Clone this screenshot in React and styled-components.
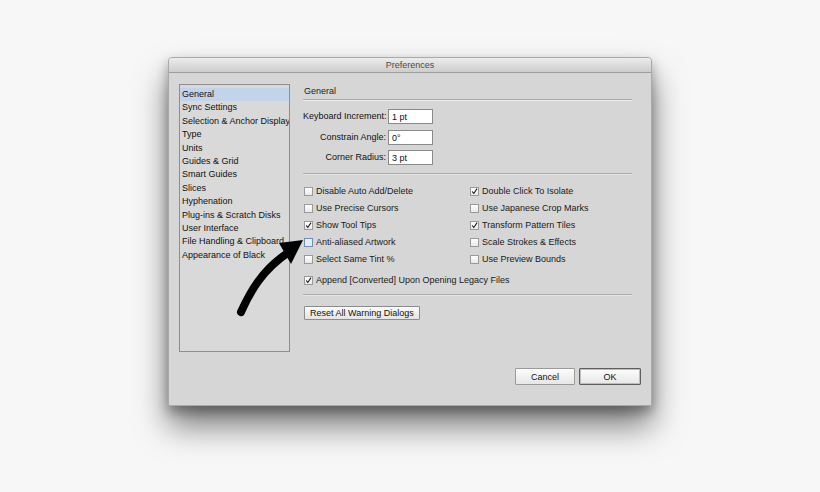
import React from 'react'
import styled, { createGlobalStyle } from 'styled-components'

const Global = createGlobalStyle`
  html, body { margin: 0; padding: 0; background: #f7f7f7; }
  body { font-family: "Liberation Sans", Arial, sans-serif; }
`

const sections = [
  'General', 'Sync Settings', 'Selection & Anchor Display', 'Type', 'Units',
  'Guides & Grid', 'Smart Guides', 'Slices', 'Hyphenation', 'Plug-ins & Scratch Disks',
  'User Interface', 'File Handling & Clipboard', 'Appearance of Black',
]

const fields = [
  { label: 'Keyboard Increment:', value: '1 pt' },
  { label: 'Constrain Angle:', value: '0°' },
  { label: 'Corner Radius:', value: '3 pt' },
]

const checks = [
  ['Disable Auto Add/Delete', false], ['Double Click To Isolate', true],
  ['Use Precise Cursors', false], ['Use Japanese Crop Marks', false],
  ['Show Tool Tips', true], ['Transform Pattern Tiles', true],
  ['Anti-aliased Artwork', false, true], ['Scale Strokes & Effects', false],
  ['Select Same Tint %', false], ['Use Preview Bounds', false],
]

function Check({ on, focus, children }) {
  return (
    <S.CheckRow>
      <S.Box $focus={focus}>
        {on && (
          <svg width="9" height="9" viewBox="0 0 9 9">
            <path d="M1.5 4.5 L3.6 7 L7.8 0.8" fill="none" stroke="#111" strokeWidth="1.3" />
          </svg>
        )}
      </S.Box>
      {children}
    </S.CheckRow>
  )
}

export default function App() {
  return (
    <S.Page>
      <Global />
      <S.Window>
        <S.TitleBar>Preferences</S.TitleBar>
        <S.Body>
          <S.Sidebar>
            {sections.map((s, i) => (
              <S.Item key={s} $active={i === 0}>{s}</S.Item>
            ))}
          </S.Sidebar>
          <S.Main>
            <S.Heading>General</S.Heading>
            <S.Fields>
              {fields.map(f => (
                <S.FieldRow key={f.label}>
                  <S.Label>{f.label}</S.Label>
                  <S.Input>{f.value}</S.Input>
                </S.FieldRow>
              ))}
            </S.Fields>
            <S.Rule />
            <S.Checks>
              {checks.map(([t, on, focus]) => (
                <Check key={t} on={on} focus={focus}>{t}</Check>
              ))}
            </S.Checks>
            <S.Single>
              <Check on>Append [Converted] Upon Opening Legacy Files</Check>
            </S.Single>
            <S.Rule />
            <S.SmallButton>Reset All Warning Dialogs</S.SmallButton>
          </S.Main>
        </S.Body>
        <S.Footer>
          <S.Button>Cancel</S.Button>
          <S.Button $default>OK</S.Button>
        </S.Footer>
      </S.Window>
      <S.Arrow viewBox="0 0 820 492" width="820" height="492">
        <path d="M241 312 C 250 292, 262 270, 289 252" fill="none" stroke="#000" strokeWidth="8" strokeLinecap="round" />
        <polygon points="303,240 279,243 291,264" fill="#000" />
      </S.Arrow>
    </S.Page>
  )
}

const S = {
  Page: styled.div`
    position: relative;
    width: 820px;
    height: 492px;
    padding: 57px 0 0 168px;
    box-sizing: border-box;
    overflow: hidden;
  `,
  Window: styled.div`
    width: 484px;
    height: 349px;
    background: #d6d6d6;
    border: 1px solid #a9a9a9;
    border-radius: 4px 4px 0 0;
    box-sizing: border-box;
    display: flex;
    flex-direction: column;
    box-shadow: 0 20px 32px rgba(0,0,0,0.5), 0 6px 12px rgba(0,0,0,0.3);
  `,
  TitleBar: styled.div`
    height: 14px;
    line-height: 14px;
    text-align: center;
    font-size: 9px;
    color: #4a4a4a;
    background: linear-gradient(#ececec, #cdcdcd);
    border-bottom: 1px solid #9d9d9d;
    border-radius: 3px 3px 0 0;
  `,
  Body: styled.div`
    display: flex;
    gap: 13px;
    padding: 11px 19px 0 10px;
  `,
  Sidebar: styled.div`
    width: 111px;
    height: 268px;
    box-sizing: border-box;
    background: #d9d9d9;
    border: 1px solid #8e8e8e;
    padding: 3px 0 0 0;
    display: flex;
    flex-direction: column;
  `,
  Item: styled.div`
    height: 13.4px;
    line-height: 13.4px;
    padding-left: 2px;
    font-size: 9px;
    color: #111;
    white-space: nowrap;
    overflow: hidden;
    background: ${p => (p.$active ? '#c2d3ea' : 'transparent')};
  `,
  Main: styled.div`
    flex: 1;
    display: flex;
    flex-direction: column;
  `,
  Heading: styled.div`
    font-size: 9px;
    color: #222;
    padding: 0 0 3px 1px;
    border-bottom: 1px solid #a8a8a8;
    box-shadow: 0 1px 0 #ececec;
    margin-top: 2px;
  `,
  Fields: styled.div`
    display: grid;
    grid-template-columns: 83px 45px;
    column-gap: 2px;
    row-gap: 5.5px;
    padding: 9px 0 8px 0;
  `,
  FieldRow: styled.div`
    display: contents;
  `,
  Label: styled.div`
    font-size: 9px;
    color: #111;
    text-align: right;
    line-height: 15px;
    white-space: nowrap;
  `,
  Input: styled.div`
    height: 15px;
    line-height: 14px;
    box-sizing: border-box;
    background: #fff;
    border: 1px solid #8a8a8a;
    font-size: 9px;
    padding-left: 3px;
    color: #111;
  `,
  Rule: styled.div`
    height: 0;
    border-top: 1px solid #ababab;
    border-bottom: 1px solid #e6e6e6;
  `,
  Checks: styled.div`
    display: grid;
    grid-template-columns: 166px 1fr;
    row-gap: 5px;
    padding: 10px 0 0 1px;
  `,
  Single: styled.div`
    padding: 9px 0 8px 1px;
  `,
  CheckRow: styled.div`
    display: flex;
    align-items: center;
    gap: 3px;
    height: 12px;
    font-size: 9px;
    color: #1a1a1a;
    white-space: nowrap;
  `,
  Box: styled.span`
    width: 9px;
    height: 9px;
    box-sizing: border-box;
    border: 1px solid ${p => (p.$focus ? '#6f8fbf' : '#9a9a9a')};
    background: ${p => (p.$focus ? '#e4ecf7' : 'linear-gradient(#ffffff, #e8e8e8)')};
    display: inline-flex;
    align-items: center;
    justify-content: center;
    overflow: visible;
  `,
  SmallButton: styled.button`
    align-self: flex-start;
    margin: 10px 0 0 1px;
    height: 14px;
    padding: 0 5px;
    font-family: inherit;
    font-size: 9px;
    color: #111;
    background: linear-gradient(#fbfbfb, #e4e4e4);
    border: 1px solid #8c8c8c;
    border-radius: 1px;
  `,
  Footer: styled.div`
    margin-top: auto;
    display: flex;
    justify-content: flex-end;
    gap: 4px;
    padding: 0 10px 20px 0;
  `,
  Button: styled.button`
    width: ${p => (p.$default ? '62px' : '60px')};
    height: 17px;
    font-family: inherit;
    font-size: 9px;
    color: #111;
    background: linear-gradient(#fdfdfd, #e6e6e6);
    border: 1px solid ${p => (p.$default ? '#5e5e5e' : '#9a9a9a')};
    box-shadow: ${p => (p.$default ? 'inset 0 0 0 1px #bdbdbd' : 'none')};
    border-radius: 1px;
  `,
  Arrow: styled.svg`
    position: absolute;
    left: 0;
    top: 0;
    pointer-events: none;
  `,
}
